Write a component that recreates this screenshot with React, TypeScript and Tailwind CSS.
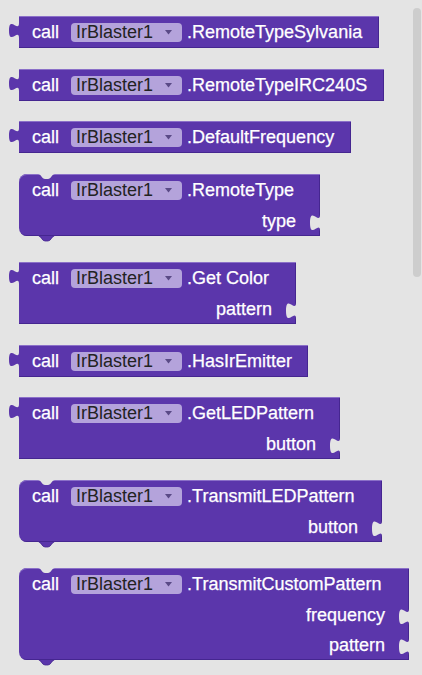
import React from "react";

type BlockProps = {
  method: string;
  args?: string[];
  statement?: boolean;
  width: string;
  className?: string;
};

const BG = "#e4e4e4";
const FILL = "#5b36ab";

// puzzle tab, drawn as it sits on a block's left edge (base at x=10)
const TAB_PATH = "M10,0 V5 C10,15 0,-3 0,12.5 S10,10 10,20 Z";

function OutputTab() {
  return (
    <svg
      className="absolute left-[-10px] top-[2px]"
      width="10"
      height="20"
      viewBox="0 0 10 20"
    >
      <path d={TAB_PATH} fill={FILL} />
    </svg>
  );
}

function Socket() {
  return (
    <svg
      className="absolute right-0 top-[3px]"
      width="10"
      height="22"
      viewBox="0 0 10 20"
      preserveAspectRatio="none"
    >
      <path d={TAB_PATH} fill={BG} />
    </svg>
  );
}

function Dropdown() {
  return (
    <span className="inline-flex items-center h-[19px] rounded-[4px] bg-[#b4a3db] pl-[5px] pr-[10px] text-[#222]">
      <span className="leading-none">IrBlaster1</span>
      <svg className="ml-[12px]" width="7" height="5" viewBox="0 0 7 5">
        <path d="M0,0 H7 L3.5,4.5 Z" fill="#5a4a86" />
      </svg>
    </span>
  );
}

function Block({ method, args = [], statement, width, className }: BlockProps) {
  return (
    <div
      className={clsxLike(
        "relative bg-[#5b36ab] shadow-[inset_0_1px_0_#8b70c8,inset_-1px_-1px_0_#452690]",
        statement ? "rounded-l-[8px]" : "",
        width,
        className
      )}
    >
      {!statement && <OutputTab />}
      {statement && (
        <>
          <svg className="absolute left-[19px] top-0" width="17" height="5" viewBox="0 0 17 5">
            <path d="M0,0 C3,0 4,5 7,5 H10 C13,5 14,0 17,0 Z" fill={BG} />
          </svg>
          <svg className="absolute left-[19px] top-full" width="17" height="6" viewBox="0 0 17 6">
            <path d="M0,0 C3,0 4,5 7,5 H10 C13,5 14,0 17,0 Z" fill={FILL} />
            <path d="M1,0 C3,0 4,5 7,5 H10 C13,5 14,0 16,0" fill="none" stroke="#452690" strokeWidth="0.8" />
          </svg>
        </>
      )}
      <div className="flex items-center h-[32px] pl-[13px] text-white [-webkit-text-stroke:0.25px_white] whitespace-nowrap">
        <span>call</span>
        <span className="ml-[12px] [-webkit-text-stroke:0]">
          <Dropdown />
        </span>
        <span className="ml-[5px]">.{method}</span>
      </div>
      {args.map((a) => (
        <div
          key={a}
          className="relative flex items-center justify-end h-[30px] pr-[24px] text-white [-webkit-text-stroke:0.25px_white]"
        >
          <span>{a}</span>
          <Socket />
        </div>
      ))}
    </div>
  );
}

function clsxLike(...c: (string | undefined)[]) {
  return c.filter(Boolean).join(" ");
}

export default function App() {
  return (
    <div className="relative w-[422px] h-[675px] overflow-hidden bg-[#e4e4e4] font-['Liberation_Sans',Arial,sans-serif] text-[18px] leading-none">
      <div className="flex flex-col items-start pl-[19px] pt-[16px]">
        <Block method="RemoteTypeSylvania" width="w-[360px]" />
        <Block method="RemoteTypeIRC240S" width="w-[365px]" className="mt-[21px]" />
        <Block method="DefaultFrequency" width="w-[332px]" className="mt-[20px]" />
        <Block method="RemoteType" args={["type"]} statement width="w-[301px]" className="mt-[21px]" />
        <Block method="Get Color" args={["pattern"]} width="w-[277px]" className="mt-[26px]" />
        <Block method="HasIrEmitter" width="w-[289px]" className="mt-[21px]" />
        <Block method="GetLEDPattern" args={["button"]} width="w-[321px]" className="mt-[20px]" />
        <Block method="TransmitLEDPattern" args={["button"]} statement width="w-[363px]" className="mt-[21px]" />
        <Block
          method="TransmitCustomPattern"
          args={["frequency", "pattern"]}
          statement
          width="w-[390px]"
          className="mt-[26px]"
        />
      </div>

      {/* flyout scrollbar */}
      <div className="absolute right-[1px] top-[8px] w-[8px] h-[269px] rounded-[4px] bg-[#cdcdcd]" />
    </div>
  );
}
